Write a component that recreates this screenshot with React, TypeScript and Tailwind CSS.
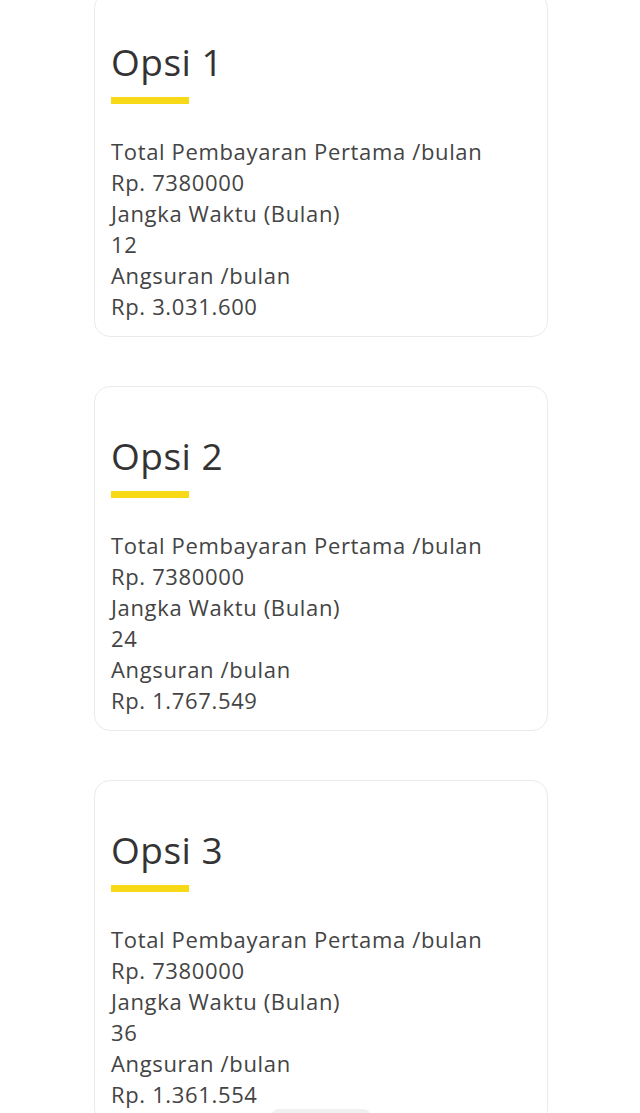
import React from 'react';

// Daftar opsi cicilan
const options = [
  { id: 1, tenor: '12', angsuran: 'Rp. 3.031.600' },
  { id: 2, tenor: '24', angsuran: 'Rp. 1.767.549' },
  { id: 3, tenor: '36', angsuran: 'Rp. 1.361.554' },
];

const OptionCard: React.FC<{ id: number; tenor: string; angsuran: string }> = ({ id, tenor, angsuran }) => (
  <div className="bg-white border border-[#ebebeb] rounded-2xl pl-4 pr-4 pt-[50px] pb-[14px]">
    <h2 className="text-[37px] leading-[37px] text-[#333333] tracking-[0.5px]">Opsi {id}</h2>
    <div className="mt-[17px] w-[78px] h-[7px] bg-[#f7d917]" />
    <div className="mt-[32px] text-[22px] leading-[31px] text-[#444444] tracking-[0.65px]">
      <div>Total Pembayaran Pertama /bulan</div>
      <div>Rp. 7380000</div>
      <div>Jangka Waktu (Bulan)</div>
      <div>{tenor}</div>
      <div>Angsuran /bulan</div>
      <div>{angsuran}</div>
    </div>
  </div>
);

export default function App() {
  return (
    <div
      className="relative w-[640px] h-[1113px] overflow-hidden bg-white"
      style={{ fontFamily: '"Open Sans", "Liberation Sans", sans-serif' }}
    >
      <div className="w-[454px] ml-[94px] -mt-2 flex flex-col gap-[49px]">
        {options.map(o => (
          <OptionCard key={o.id} {...o} />
        ))}
      </div>
      {/* tombol mengambang di bawah, hanya terlihat sedikit */}
      <div className="absolute top-[1109px] left-[272px] w-[98px] h-[12px] rounded-t-md bg-[#f0f0f0]" />
    </div>
  );
}
